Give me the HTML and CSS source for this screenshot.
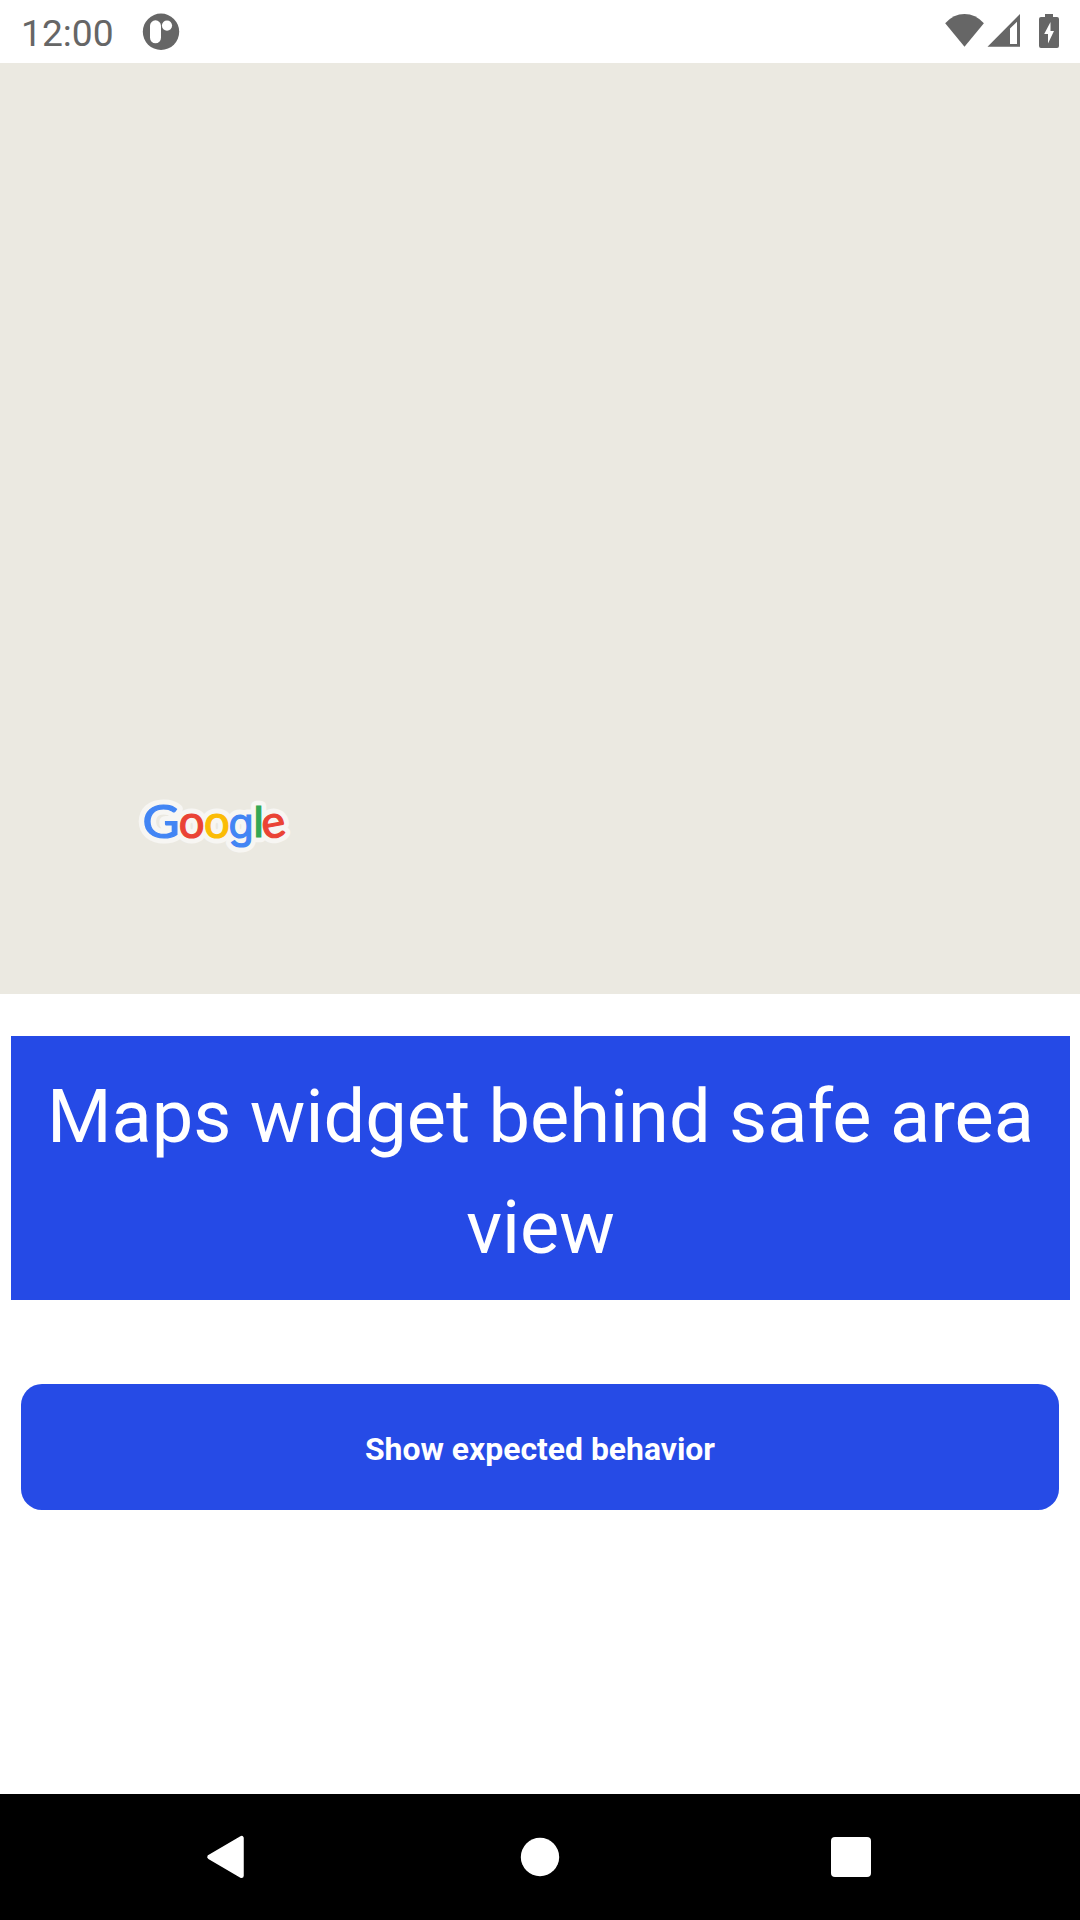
FILE: index.html
```html
<!DOCTYPE html>
<html lang="en">
<head>
<meta charset="utf-8">
<title>Maps widget</title>
<link rel="stylesheet" href="styles.css">
</head>
<body>
<div class="screen">
  <header class="status-bar">
    <div class="status-left">
      <span class="clock">12:00</span>
      <svg class="app-icon" width="38" height="38" viewBox="0 0 38 38">
        <circle cx="19" cy="18.8" r="18.2" fill="#666"/>
        <rect x="8" y="7.3" width="11" height="23" rx="5.5" fill="#fff"/>
        <circle cx="25" cy="12.6" r="5.1" fill="#fff"/>
      </svg>
    </div>
    <svg class="status-icons" width="116" height="36" viewBox="0 0 116 36" fill="#666">
      <path d="M.2 10.2Q8.5 1 19.5 1T38.9 10.2L19.5 33.7Z"/>
      <path fill-rule="evenodd" d="M42.5 33.7L75 1V33.7ZM65 15.4V31H72V8.8Z"/>
      <path d="M100 1H108V4H112Q114 4 114 6V33Q114 35 112 35H96Q94 35 94 33V6Q94 4 96 4H100Z"/>
      <path fill="#fff" d="M105.5 9L99.2 21H103V30.4L109 18H105.5Z"/>
    </svg>
  </header>
  <main class="content">
    <section class="map">
      <svg class="map-logo" width="170" height="70" viewBox="0 0 170 70">
        <g class="logo-halo">
          <text class="logo-main" transform="translate(12.6 46.8) scale(1.12 1.02)">G</text>
          <text class="logo-main" x="48.7" y="46.8">o</text>
          <text class="logo-main" x="74" y="46.8">o</text>
          <text class="logo-tail" x="98.4" y="47.2">g</text>
          <text class="logo-main" transform="translate(123.2 46.4) scale(1 .94)">l</text>
          <text class="logo-main" transform="translate(133.8 48.4) rotate(-10)">e</text>
        </g>
        <g class="logo-face">
          <text class="logo-main blue" transform="translate(12.6 46.8) scale(1.12 1.02)">G</text>
          <text class="logo-main red" x="48.7" y="46.8">o</text>
          <text class="logo-main yellow" x="74" y="46.8">o</text>
          <text class="logo-tail blue" x="98.4" y="47.2">g</text>
          <text class="logo-main green" transform="translate(123.2 46.4) scale(1 .94)">l</text>
          <text class="logo-main red" transform="translate(133.8 48.4) rotate(-10)">e</text>
        </g>
      </svg>
    </section>
    <h1 class="title">Maps widget behind safe area view</h1>
    <button class="action" type="button">Show expected behavior</button>
  </main>
  <nav class="nav-bar">
    <svg width="38" height="44" viewBox="0 0 38 44"><path d="M3.5 22L35.5 3.2V40.8Z" fill="#fff" stroke="#fff" stroke-width="4.5" stroke-linejoin="round"/></svg>
    <svg width="40" height="40" viewBox="0 0 40 40"><circle cx="20" cy="20" r="19.2" fill="#fff"/></svg>
    <svg width="40" height="40" viewBox="0 0 40 40"><rect width="40" height="40" rx="4" fill="#fff"/></svg>
  </nav>
</div>
</body>
</html>
```
FILE: styles.css
```css
* { box-sizing: border-box; }
body { margin: 0; font-family: Roboto, sans-serif; background: #fff; }
.screen { width: 1080px; height: 1920px; display: flex; flex-direction: column; }
.status-bar {
  height: 63px;
  padding: 0 19px 0 21px;
  display: flex;
  justify-content: space-between;
}
.status-left { display: flex; }
.clock { width: 121px; font-size: 37.2px; line-height: 43px; padding-top: 12px; color: #666; }
.app-icon { margin-top: 13px; }
.status-icons { margin-top: 13px; }
.content { flex: 1; display: flex; flex-direction: column; }
.map {
  height: 931px;
  background: #ebe9e1;
  display: flex;
  align-items: flex-end;
  padding: 0 0 133px 130px;
}
.map-logo { display: block; }
.logo-main { font: 400 45.5px Lato, sans-serif; }
.logo-tail { font: 400 41px Inter, sans-serif; }
.logo-halo { fill: #f7f6f3; stroke: #f7f6f3; stroke-width: 11; stroke-linejoin: round; }
.logo-face { stroke-width: 1.2; }
.blue { fill: #4285f4; stroke: #4285f4; }
.red { fill: #ea4335; stroke: #ea4335; }
.yellow { fill: #fbbc05; stroke: #fbbc05; }
.green { fill: #34a853; stroke: #34a853; }
.title {
  margin: 42px 10px 0 11px;
  height: 264px;
  padding: 25px 21px 17px;
  background: #254ae6;
  color: #fff;
  font-size: 74px;
  font-weight: 400;
  line-height: 111px;
  text-align: center;
}
.action {
  margin: 84px 21px 0;
  height: 126px;
  padding: 4px 0 0;
  border: 0;
  border-radius: 21px;
  background: #264be6;
  color: #fff;
  font: 700 31.9px Roboto, sans-serif;
}
.nav-bar {
  height: 126px;
  padding: 0 209px 0 206px;
  background: #000;
  display: grid;
  grid-template-columns: 314px 311px 40px;
  align-items: center;
}
```
